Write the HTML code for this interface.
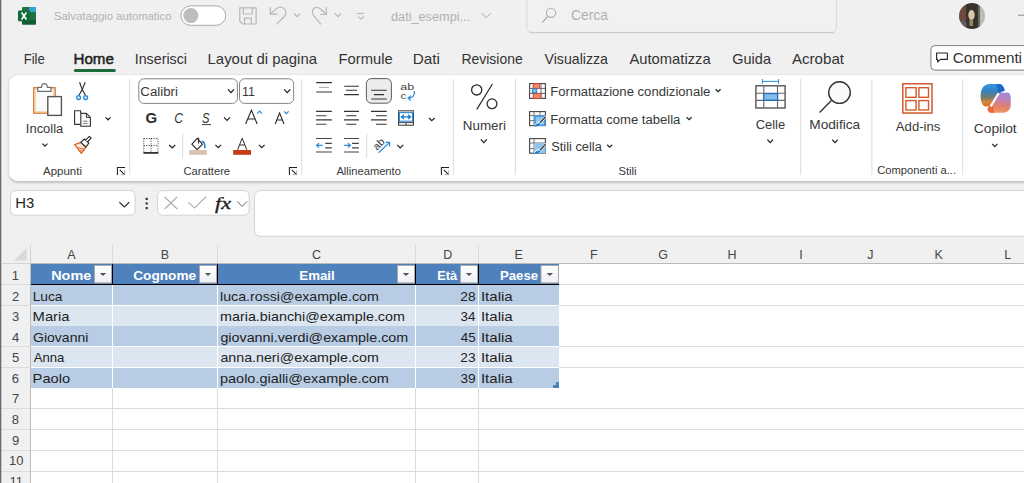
<!DOCTYPE html>
<html><head><meta charset="utf-8"><title>Excel</title>
<style>
html,body{margin:0;padding:0;width:1024px;height:483px;overflow:hidden;background:#f0f0f0;font-family:"Liberation Sans", sans-serif;}
svg{position:absolute;left:0;top:0;display:block;}
text{white-space:pre;}
</style></head><body>
<svg width="1024" height="483" viewBox="0 0 1024 483">
<defs>
  <filter id="sh" x="-5%" y="-20%" width="110%" height="150%">
    <feDropShadow dx="0" dy="1.6" stdDeviation="1.6" flood-color="#000" flood-opacity="0.26"/>
  </filter>
  <linearGradient id="fbtn" x1="0" y1="0" x2="0" y2="1">
    <stop offset="0" stop-color="#ffffff"/><stop offset="1" stop-color="#eef0f4"/>
  </linearGradient>
</defs>
<!-- app bg -->
<rect x="0" y="0" width="1024" height="483" fill="#f0f0f0"/>

<!-- ===== TITLE BAR ===== -->
<!-- excel logo -->
<g>
  <rect x="22" y="7" width="14" height="17.6" rx="1.2" fill="#1f7244"/>
  <rect x="29" y="7" width="7" height="5.2" fill="#3aa0cc"/>
  <rect x="22" y="19.8" width="14" height="4.8" rx="1" fill="#185a35"/>
  <rect x="18" y="10.5" width="12.2" height="10.8" rx="1" fill="#0f6e3a"/>
  <path d="M21.6 12.6 L26.4 19.4 M26.4 12.6 L21.6 19.4" stroke="#fff" stroke-width="1.7"/>
</g>
<!-- autosave toggle -->
<rect x="180.9" y="5.9" width="44.8" height="19.4" rx="9.7" fill="#fff" stroke="#959595" stroke-width="0.8"/>
<circle cx="190.9" cy="15.6" r="7.5" fill="#bdbdbd"/>
<!-- save -->
<path d="M239.8 7.8 H256.1 V24 H242.6 L239.8 21.2 Z" fill="none" stroke="#b6b6b6" stroke-width="1.2"/>
<path d="M243.4 7.8 V14 H252.3 V7.8" fill="none" stroke="#b6b6b6" stroke-width="1.2"/>
<path d="M244.6 24 V18.2 H251.2 V24" fill="none" stroke="#b6b6b6" stroke-width="1.2"/>
<!-- undo -->
<path d="M270.4 7.3 V14.1 H277.4" fill="none" stroke="#b6b6b6" stroke-width="1.2"/>
<path d="M270.9 13.6 L276.6 8.6 C279.5 6.2 283.6 6.8 285.3 10.2 C286.6 12.8 285.5 15.2 283.8 17 L276.4 24.4" fill="none" stroke="#b6b6b6" stroke-width="1.2"/>
<path d="M294 13.5 L297 16.6 L300 13.5" fill="none" stroke="#b6b6b6" stroke-width="1.1"/>
<!-- redo -->
<path d="M326.3 7.1 V14.5 H320" fill="none" stroke="#b6b6b6" stroke-width="1.2"/>
<path d="M325.8 14 L320.2 8.8 C317.5 6.3 313.6 6.8 312.6 10.6 C311.9 13.2 313.3 15.4 315 17.2 L320.9 24.3" fill="none" stroke="#b6b6b6" stroke-width="1.2"/>
<path d="M335 13.5 L338 16.6 L341 13.5" fill="none" stroke="#b6b6b6" stroke-width="1.1"/>
<!-- customize -->
<path d="M356.8 13.4 H363.8" stroke="#b6b6b6" stroke-width="1.1"/>
<path d="M358 16.6 L361 19 L364 16.6" fill="none" stroke="#b6b6b6" stroke-width="1.1"/>
<!-- filename chevron -->
<path d="M481.6 13.2 L486.1 17.7 L490.6 13.2" fill="none" stroke="#a8a8a8" stroke-width="1"/>
<!-- search box -->
<rect x="526.8" y="-6" width="309.6" height="38.4" rx="5" fill="#f1f1f1" stroke="#d8d8d8" stroke-width="1"/>
<path d="M529 32.6 H834.6" stroke="#cdcdcd" stroke-width="1.2"/>
<circle cx="551" cy="12.8" r="4.6" fill="none" stroke="#b0b0b0" stroke-width="1.1"/>
<path d="M547.5 16.5 L542 22.8" stroke="#b0b0b0" stroke-width="1.2"/>
<!-- avatar -->
<defs>
  <clipPath id="av"><circle cx="972" cy="16" r="13"/></clipPath>
</defs>
<filter id="avb"><feGaussianBlur stdDeviation="0.5"/></filter>
<g clip-path="url(#av)" filter="url(#avb)">
  <rect x="959" y="3" width="26" height="26" fill="#35312f"/>
  <rect x="959" y="3" width="7" height="22" fill="#6e4a3a"/>
  <rect x="979.5" y="3" width="6" height="26" fill="#bdbab4"/>
  <rect x="978" y="3" width="2" height="26" fill="#6a6866"/>
  <ellipse cx="971.5" cy="15" rx="3.2" ry="5" fill="#d9c7a6"/>
  <rect x="969.5" y="19" width="3.5" height="7" fill="#b89a70" opacity="0.8"/>
  <circle cx="962.5" cy="25" r="4.5" fill="#5c5c5c"/>
</g>
<!-- minimize -->
<rect x="1018" y="14.7" width="6" height="1" fill="#8a8a8a"/>

<!-- ===== TABS ===== -->
<rect x="73.9" y="69" width="42" height="3" rx="1.5" fill="#1d6b3d"/>
<!-- commenti button -->
<rect x="930.9" y="45.6" width="100" height="24.5" rx="4" fill="#fff" stroke="#7e7e7e" stroke-width="1"/>
<path d="M936.6 53 H947.4 V59.4 H940.6 L937.6 62 V59.4 H936.6 Z" fill="none" stroke="#262626" stroke-width="1.1" stroke-linejoin="round"/>

<!-- ===== RIBBON PANEL ===== -->
<rect x="9.5" y="75" width="1030" height="105.7" rx="8" fill="#ffffff" filter="url(#sh)"/>
<rect x="10" y="74.6" width="1030" height="105.7" rx="8" fill="none" stroke="#e2e2e2" stroke-width="0.8"/>
<rect x="9.5" y="76" width="1030" height="104.7" rx="8" fill="#ffffff"/>
<!-- ===== FORMULA BAR ===== -->
<rect x="10.5" y="190.6" width="124.6" height="24.6" rx="5" fill="#fff" stroke="#d2d2d2" stroke-width="1"/>
<path d="M119.4 202.2 L124.3 207 L129.2 202.2" fill="none" stroke="#333" stroke-width="1.2"/>
<rect x="145.6" y="197.8" width="2.2" height="2.2" fill="#333"/>
<rect x="145.6" y="202.4" width="2.2" height="2.2" fill="#333"/>
<rect x="145.6" y="207" width="2.2" height="2.2" fill="#333"/>
<rect x="157.6" y="190.6" width="91.6" height="24.6" rx="5" fill="#fff" stroke="#d2d2d2" stroke-width="1"/>
<path d="M164.6 196.9 L177.2 209 M177.2 196.9 L164.6 209" stroke="#a8a8a8" stroke-width="1.1"/>
<path d="M188.4 202.3 L194.6 208.1 L206 196.6" fill="none" stroke="#a8a8a8" stroke-width="1.1"/>
<path d="M237.2 201.4 L242.1 206.4 L247 201.4" fill="none" stroke="#555" stroke-width="0.9"/>
<rect x="254.5" y="190.6" width="800" height="45.7" rx="6" fill="#fff" stroke="#d2d2d2" stroke-width="1"/>

<!-- ===== GRID ===== -->
<!-- column header row -->
<rect x="0" y="244" width="1024" height="20" fill="#f0f0f0"/>
<path d="M14 260.6 L26.6 248 V260.6 Z" fill="#d9d9d9"/>
<rect x="30" y="263" width="994" height="1" fill="#bababa"/>
<!-- header column separators A-E -->
<g fill="#dadada">
  <rect x="112" y="245" width="1" height="18"/>
  <rect x="217" y="245" width="1" height="18"/>
  <rect x="415" y="245" width="1" height="18"/>
  <rect x="478" y="245" width="1" height="18"/>
</g>
<!-- cells bg -->
<rect x="31" y="264" width="993" height="219" fill="#ffffff"/>
<!-- row header right border -->
<rect x="30" y="264" width="1" height="219" fill="#bdbdbd"/>
<rect x="30" y="245" width="1" height="19" fill="#d2d2d2"/>
<rect x="2" y="263" width="28" height="1" fill="#d4d4d4"/>
<!-- horizontal gridlines -->
<g fill="#dcdcdc">
  <rect x="559" y="284" width="465" height="1"/>
  <rect x="559" y="305" width="465" height="1"/>
  <rect x="559" y="346" width="465" height="1"/>
  <rect x="559" y="367" width="465" height="1"/>
  <rect x="31" y="408" width="993" height="1"/>
  <rect x="31" y="429" width="993" height="1"/>
  <rect x="31" y="450" width="993" height="1"/>
  <rect x="31" y="471" width="993" height="1"/>
</g>
<g fill="#dcdcdc">
  <rect x="0" y="284" width="30" height="1"/>
  <rect x="0" y="305" width="30" height="1"/>
  <rect x="0" y="346" width="30" height="1"/>
  <rect x="0" y="367" width="30" height="1"/>
  <rect x="0" y="408" width="30" height="1"/>
  <rect x="0" y="429" width="30" height="1"/>
  <rect x="0" y="450" width="30" height="1"/>
  <rect x="0" y="471" width="30" height="1"/>
</g>
<!-- vertical gridlines below table -->
<g fill="#dcdcdc">
  <rect x="112" y="388" width="1" height="95"/>
  <rect x="217" y="388" width="1" height="95"/>
  <rect x="415" y="388" width="1" height="95"/>
  <rect x="478" y="388" width="1" height="95"/>
</g>
<!-- table -->
<rect x="31" y="264" width="528" height="20" fill="#4f81bd"/>
<rect x="31" y="284" width="528" height="1" fill="#000"/>
<g fill="#000">
  <rect x="112" y="264" width="1" height="20"/>
  <rect x="217" y="264" width="1" height="20"/>
  <rect x="415" y="264" width="1" height="20"/>
  <rect x="478" y="264" width="1" height="20"/>
</g>
<rect x="31" y="285" width="528" height="20" fill="#b8cce4"/>
<rect x="31" y="305" width="528" height="1" fill="#ffffff"/>
<rect x="31" y="306" width="528" height="20" fill="#dce6f1"/>
<rect x="31" y="326" width="528" height="20" fill="#b8cce4"/>
<rect x="31" y="346" width="528" height="1" fill="#ffffff"/>
<rect x="31" y="347" width="528" height="20" fill="#dce6f1"/>
<rect x="31" y="367" width="528" height="1" fill="#ffffff"/>
<rect x="31" y="368" width="528" height="20" fill="#b8cce4"/>
<g fill="#ffffff">
  <rect x="112" y="285" width="1" height="103"/>
  <rect x="217" y="285" width="1" height="103"/>
  <rect x="415" y="285" width="1" height="103"/>
  <rect x="478" y="285" width="1" height="103"/>
</g>
<!-- resize handle -->
<path d="M559 382 V388 H553 V385 H556 V382 Z" fill="#4582b8"/>
<!-- filter buttons -->
<g>
  <rect x="94.5" y="265.5" width="17" height="17.4" fill="url(#fbtn)" stroke="#a9a9a9" stroke-width="1"/>
  <path d="M99.8 273 H106.2 L103 276 Z" fill="#555"/>
  <rect x="199.5" y="265.5" width="17" height="17.4" fill="url(#fbtn)" stroke="#a9a9a9" stroke-width="1"/>
  <path d="M204.8 273 H211.2 L208 276 Z" fill="#555"/>
  <rect x="397.5" y="265.5" width="17" height="17.4" fill="url(#fbtn)" stroke="#a9a9a9" stroke-width="1"/>
  <path d="M402.8 273 H409.2 L406 276 Z" fill="#555"/>
  <rect x="460.5" y="265.5" width="17" height="17.4" fill="url(#fbtn)" stroke="#a9a9a9" stroke-width="1"/>
  <path d="M465.8 273 H472.2 L469 276 Z" fill="#555"/>
  <rect x="541" y="265.5" width="17.4" height="17.4" fill="url(#fbtn)" stroke="#a9a9a9" stroke-width="1"/>
  <path d="M546.6 273 H553 L549.8 276 Z" fill="#555"/>
</g>
<!-- ===== RIBBON ICONS ===== -->
<g fill="none" stroke-linecap="butt">
<!-- separators -->
<g fill="#dcdcdc" stroke="none">
  <rect x="129.2" y="79" width="1" height="96"/>
  <rect x="301.2" y="79" width="1" height="96"/>
  <rect x="452.8" y="79" width="1" height="96"/>
  <rect x="514.8" y="79" width="1" height="96"/>
  <rect x="800.2" y="79" width="1" height="96"/>
  <rect x="871.4" y="79" width="1" height="96"/>
  <rect x="962.2" y="79" width="1" height="96"/>
  <rect x="182.2" y="133" width="1" height="25.6"/>
  <rect x="366.2" y="133" width="1" height="25"/>
</g>
<!-- paste -->
<rect x="33.8" y="87.8" width="21.3" height="25.3" fill="#fafafa" stroke="#e07b35" stroke-width="1.5"/>
<rect x="35.2" y="89.2" width="18.5" height="22.5" fill="none" stroke="#f1d9a6" stroke-width="1.2"/>
<path d="M37.8 87.4 H41.4 C41.6 84.4 43 83.6 44.4 83.6 C45.8 83.6 47.2 84.4 47.4 87.4 H51 V91.4 H37.8 Z" fill="#fff" stroke="#707070" stroke-width="1.2"/>
<rect x="47.8" y="96.6" width="13.6" height="18.8" fill="#fff" stroke="#555" stroke-width="1.4"/>
<!-- cut -->
<path d="M79.6 82.2 L82.2 89.6 L85.4 95.2 M85.2 82.2 L82.2 89.6 L79 95.2" stroke="#2b2b2b" stroke-width="1.15"/>
<circle cx="78.6" cy="97.6" r="1.9" stroke="#2b88d8" stroke-width="1.4"/>
<circle cx="85.6" cy="97.6" r="1.9" stroke="#2b88d8" stroke-width="1.4"/>
<!-- copy -->
<path d="M80.6 124.4 H74.6 V110.8 H80.6 V113" stroke="#333" stroke-width="1.1"/>
<path d="M80.8 113.4 H86.4 L90.4 117.4 V126.3 H80.8 Z" fill="#f6f6f6" stroke="#333" stroke-width="1.1"/>
<path d="M86.4 113.4 V117.4 H90.4" stroke="#333" stroke-width="1"/>
<path d="M83.2 121.2 H87.4 M83.2 123.4 H87.4" stroke="#777" stroke-width="0.9"/>
<path d="M105.6 117.4 L108.1 119.8 L110.6 117.4" stroke="#222" stroke-width="1.2"/>
<!-- format painter -->
<path d="M74.6 144.6 L80.8 142.4 L86 147 L81.4 153.4 Z" fill="#fbe6d8" stroke="#e0662a" stroke-width="1.3" stroke-linejoin="round"/>
<path d="M76.8 147.6 L84 149.2 M78.6 150.6 L82.8 151" stroke="#e0662a" stroke-width="1"/>
<path d="M80.8 142.4 L84.4 139 L88.8 143.2 L86 147 Z" fill="#fff" stroke="#2b2b2b" stroke-width="1.15" stroke-linejoin="round"/>
<path d="M85.6 140.2 L89.4 136.4 L91.2 138.2 L87.4 142" fill="#fff" stroke="#2b2b2b" stroke-width="1.15" stroke-linejoin="round"/>
<!-- incolla chevron -->
<path d="M42.4 143.6 L44.9 146.2 L47.4 143.6" stroke="#222" stroke-width="1.2"/>
<!-- launchers -->
<path d="M117.4 175 V167.4 H125.0" stroke="#222" stroke-width="1.05"/><path d="M119.8 169.9 L124.6 174.6" stroke="#222" stroke-width="1.1"/><path d="M124.6 170.4 V174.6 H120.6" stroke="#999" stroke-width="0.8"/>
<path d="M289.4 175 V167.4 H297.0" stroke="#222" stroke-width="1.05"/><path d="M291.8 169.9 L296.6 174.6" stroke="#222" stroke-width="1.1"/><path d="M296.6 170.4 V174.6 H292.6" stroke="#999" stroke-width="0.8"/>
<path d="M441.4 175 V167.4 H449.0" stroke="#222" stroke-width="1.05"/><path d="M443.8 169.9 L448.6 174.6" stroke="#222" stroke-width="1.1"/><path d="M448.6 170.4 V174.6 H444.6" stroke="#999" stroke-width="0.8"/>

<!-- font combos -->
<rect x="138.8" y="78.8" width="98.6" height="24.6" rx="5" fill="#fff" stroke="#858585" stroke-width="1"/>
<path d="M228 89.4 L231 92.6 L234 89.4" stroke="#222" stroke-width="1.3"/>
<rect x="239.5" y="78.8" width="54.2" height="24.6" rx="5" fill="#fff" stroke="#858585" stroke-width="1"/>
<path d="M284.2 89.4 L287.2 92.6 L290.2 89.4" stroke="#222" stroke-width="1.3"/>
<!-- underline S -->
<path d="M202 124.6 H211" stroke="#3a3a3a" stroke-width="1"/>
<path d="M224 117.4 L227 120.4 L230 117.4" stroke="#222" stroke-width="1.2"/>
<!-- grow/shrink font -->
<path d="M245.6 124 L251.4 110.2 L257.2 124 M247.8 119 H255" stroke="#2b2b2b" stroke-width="1.1"/>
<path d="M257.2 113.6 L259.6 111.2 L262 113.6" stroke="#2b88d8" stroke-width="1.2"/>
<path d="M275.2 124 L279.6 113 L284 124 M276.8 120 H282.4" stroke="#2b2b2b" stroke-width="1.1"/>
<path d="M284.2 111.4 L286.4 113.6 L288.6 111.4" stroke="#2b88d8" stroke-width="1.3"/>
<!-- borders -->
<path d="M143.8 138.5 H158 M143.8 145.6 H158 M151 138.5 V152 M143.8 138.5 V152 M158 138.5 V152" stroke="#333" stroke-width="0.9" stroke-dasharray="1.1 1.3"/>
<rect x="143.4" y="152" width="15" height="1.8" fill="#333" stroke="none"/>
<path d="M169.2 145 L172.2 148 L175.2 145" stroke="#222" stroke-width="1.2"/>
<!-- fill color -->
<path d="M191.9 144.2 L197.2 138.4 L202.4 144.2 L197.2 149.6 Z" fill="#fff" stroke="#2b2b2b" stroke-width="1.1"/>
<path d="M198.6 137.8 V143.4" stroke="#2b2b2b" stroke-width="1.1"/>
<path d="M201.4 141.8 C203.6 141.2 205 142.8 205 148.2" stroke="#2b88d8" stroke-width="1.6"/>
<rect x="189.2" y="150" width="17.6" height="4.8" fill="#ddc3af" stroke="none"/>
<path d="M215.4 144.8 L218.2 147.6 L221 144.8" stroke="#222" stroke-width="1.2"/>
<!-- font color -->
<path d="M237.6 149.8 L242.2 138.2 L246.8 149.8 M239.6 145 H244.8" stroke="#2b2b2b" stroke-width="1"/>
<rect x="233.2" y="150" width="17.8" height="4.8" fill="#c43c12" stroke="none"/>
<path d="M259 144.8 L261.8 147.6 L264.6 144.8" stroke="#222" stroke-width="1.2"/>

<!-- alignment row1 -->
<path d="M316.2 82.6 H332 M316.2 92 H332" stroke="#333" stroke-width="1.1"/>
<path d="M319 87.4 H329" stroke="#aaa" stroke-width="1"/>
<path d="M344.2 86.2 H358.9 M346 90.2 H357 M344.2 94.6 H358.9" stroke="#333" stroke-width="1.1"/>
<rect x="366.4" y="78.6" width="25" height="24.6" rx="5" fill="#ececec" stroke="#5c5c5c" stroke-width="1"/>
<path d="M371.2 90.2 H386.8 M374 94.6 H384 M371.2 99 H386.8" stroke="#333" stroke-width="1.1"/>
<!-- wrap text -->
<path d="M414.4 91 C414.8 95.8 412.6 98.2 408.4 98.2 M410.8 95.6 L408.2 98.2 L410.8 100.6" stroke="#2b88d8" stroke-width="1.25"/>
<!-- alignment row2 -->
<path d="M316.1 111.4 H331.8 M316.1 119.9 H331.8" stroke="#333" stroke-width="1.1"/>
<path d="M316.1 115.7 H326.5 M316.1 124.3 H326.5" stroke="#444" stroke-width="1.1"/>
<path d="M344 111.4 H358.9 M344 119.9 H358.9 M346.2 115.7 H356.3 M346.2 124.3 H356.3" stroke="#333" stroke-width="1.1"/>
<path d="M371 111.4 H386.8 M371 119.9 H386.8 M376 115.7 H386.8 M376 124.3 H386.8" stroke="#333" stroke-width="1.1"/>
<!-- merge -->
<rect x="398.6" y="110.6" width="14.8" height="14.6" fill="#fff" stroke="#333" stroke-width="1"/>
<rect x="398.6" y="110.6" width="14.8" height="2" fill="#bbb" stroke="none"/>
<rect x="399.4" y="112.6" width="13.2" height="8.6" fill="#fff" stroke="#2b88d8" stroke-width="1.1"/>
<path d="M401.6 116.9 H410.4" stroke="#1e7fd0" stroke-width="1.3"/><path d="M403.6 114.6 L400.8 116.9 L403.6 119.2 Z M408.4 114.6 L411.2 116.9 L408.4 119.2 Z" fill="#1e7fd0" stroke="#1e7fd0" stroke-width="0.6"/>
<path d="M398.6 122.6 H413.4 M406 122.6 V125.2" stroke="#333" stroke-width="0.9"/>
<path d="M429 118 L431.8 120.6 L434.6 118" stroke="#222" stroke-width="1.2"/>
<!-- indent -->
<path d="M316 138.5 H331.8 M316 152 H331.8 M325.2 143.4 H331.8 M325.2 147.8 H331.8" stroke="#444" stroke-width="1.2"/>
<path d="M322.6 145.4 H316.8 M319 143.2 L316.6 145.4 L319 147.6" stroke="#2b88d8" stroke-width="1.2"/>
<path d="M344 138.5 H358.9 M344 152 H358.9 M352 143.4 H358.9 M352 147.8 H358.9" stroke="#444" stroke-width="1.2"/>
<path d="M344.2 145.4 H350.2 M348 143.2 L350.4 145.4 L348 147.6" stroke="#2b88d8" stroke-width="1.2"/>
<!-- orientation -->
<text x="378.6" y="147.6" font-family="&quot;Liberation Sans&quot;, sans-serif" font-size="10.5" fill="#333" transform="rotate(-45 378.6 144)" text-anchor="middle">ab</text>
<path d="M378.6 152.8 L389.6 142.4 M385.6 142.4 H389.6 V146.4" stroke="#2b88d8" stroke-width="1.2"/>
<path d="M397.2 144.8 L400.2 147.8 L403.2 144.8" stroke="#222" stroke-width="1.2"/>

<!-- percent -->
<circle cx="476.7" cy="89.9" r="5.1" stroke="#2b2b2b" stroke-width="1.3"/>
<circle cx="492" cy="103.8" r="4.9" stroke="#2b2b2b" stroke-width="1.3"/>
<path d="M492.4 84 L476.8 109.4" stroke="#2b2b2b" stroke-width="1.2"/>
<path d="M480.8 139.4 L483.8 142.6 L486.8 139.4" stroke="#222" stroke-width="1.3"/>

<!-- conditional formatting icon -->
<rect x="529.6" y="83.6" width="15.8" height="14.8" fill="#fff" stroke="#444" stroke-width="1.1"/>
<path d="M529.6 88.4 H545.4 M529.6 93.4 H545.4 M533.6 83.6 V98.4 M541 83.6 V98.4" stroke="#555" stroke-width="0.9"/>
<rect x="533.2" y="83.6" width="6.2" height="4.8" fill="#ec8a6e" stroke="#d24726" stroke-width="0.9"/>
<rect x="533.2" y="93.6" width="7.8" height="4.8" fill="#ec8a6e" stroke="#d24726" stroke-width="0.9"/>
<rect x="532.4" y="88.8" width="4.4" height="4" fill="#7cc0ef" stroke="#1a76c8" stroke-width="0.8"/>
<path d="M715.6 89.2 L718.1 91.6 L720.6 89.2" stroke="#222" stroke-width="1.2"/>
<!-- format as table icon -->
<rect x="529.6" y="111.6" width="15.8" height="14" fill="#fff" stroke="#444" stroke-width="1.1"/>
<path d="M529.6 115.6 H545.4 M529.6 120.6 H545.4 M534 111.6 V125.6 M540 111.6 V125.6" stroke="#666" stroke-width="0.9"/>
<path d="M534.2 115.4 H545.6 V126 H534.2 Z" fill="#4aa0e8" stroke="none"/>
<path d="M536 117 H544 V124.4 H536 Z" fill="#8ec6f2" stroke="none"/>
<path d="M535.2 126.2 C536.4 123.6 538.2 122.8 540.2 122.6 L546.2 116.4" stroke="#fff" stroke-width="2.4"/>
<path d="M540 122.8 L545.6 116.8" stroke="#333" stroke-width="1.3"/>
<path d="M534.6 126.2 C535.8 124.2 537.6 123.4 539.6 123.4 C539.4 125.2 537.6 126.2 534.6 126.2 Z" fill="#1a76c8" stroke="#1a76c8" stroke-width="0.8"/>
<path d="M686.6 117.2 L689.1 119.6 L691.6 117.2" stroke="#222" stroke-width="1.2"/>
<!-- cell styles icon -->
<rect x="529.6" y="138.6" width="15.8" height="14.6" fill="#fff" stroke="#444" stroke-width="1.1"/>
<path d="M529.6 143 H545.4 M529.6 148.6 H534 M534 138.6 V153.2" stroke="#666" stroke-width="0.9"/>
<path d="M534.2 143.4 H545.6 V153.4 H534.2 Z" fill="#8ec6f2" stroke="none"/>
<path d="M535.2 153.6 C536.4 151 538.2 150.2 540.2 150 L546.2 143.8" stroke="#fff" stroke-width="2.4"/>
<path d="M540 150.2 L545.6 144.2" stroke="#333" stroke-width="1.3"/>
<path d="M534.6 153.6 C535.8 151.6 537.6 150.8 539.6 150.8 C539.4 152.6 537.6 153.6 534.6 153.6 Z" fill="#1a76c8" stroke="#1a76c8" stroke-width="0.8"/>
<path d="M607.2 144.8 L609.7 147.2 L612.2 144.8" stroke="#222" stroke-width="1.2"/>

<!-- cells icon -->
<rect x="755.9" y="85.8" width="29.2" height="22.2" fill="#fff" stroke="#555" stroke-width="1.4"/>
<path d="M763.8 85.8 V108 M777.5 85.8 V108 M755.9 93.3 H785.1 M755.9 100.4 H785.1" stroke="#666" stroke-width="1.1"/>
<rect x="763.8" y="93.6" width="13.8" height="6.6" fill="#86bde9" stroke="#1e6fc0" stroke-width="1.2"/>
<path d="M762.4 81.4 H778.6 M762.4 79 V83.8 M778.6 79 V83.8" stroke="#2b88d8" stroke-width="1"/>
<path d="M767.4 139.6 L770.2 142.6 L773 139.6" stroke="#222" stroke-width="1.3"/>
<!-- find -->
<circle cx="839.5" cy="92.6" r="10.8" fill="#fafafa" stroke="#333" stroke-width="1.4"/>
<path d="M831.4 100.6 L819.6 112.4" stroke="#333" stroke-width="1.4"/>
<path d="M832.2 139.6 L835 142.6 L837.8 139.6" stroke="#222" stroke-width="1.3"/>
<!-- add-ins -->
<rect x="902.8" y="83.8" width="29.2" height="29.2" stroke="#d35a2c" stroke-width="1.5"/>
<rect x="905.9" y="87.7" width="10.2" height="9.6" stroke="#d35a2c" stroke-width="1.4"/>
<rect x="918.9" y="87.7" width="9.6" height="9.6" stroke="#d35a2c" stroke-width="1.4"/>
<rect x="905.9" y="100.6" width="10.2" height="9.4" stroke="#d35a2c" stroke-width="1.4"/>
<rect x="918.9" y="100.6" width="9.6" height="9.4" stroke="#d35a2c" stroke-width="1.4"/>
<!-- copilot -->
<defs>
  <linearGradient id="cpl" x1="0" y1="0" x2="0" y2="1">
    <stop offset="0" stop-color="#3594e0"/><stop offset="0.3" stop-color="#2f86c4"/><stop offset="0.5" stop-color="#5f7c88"/><stop offset="0.62" stop-color="#7a7a6a"/><stop offset="0.78" stop-color="#cf8a3c"/><stop offset="1" stop-color="#e5692c"/>
  </linearGradient>
  <linearGradient id="cpr" x1="0.6" y1="0" x2="0.4" y2="1">
    <stop offset="0" stop-color="#a786d6"/><stop offset="0.3" stop-color="#b985c0"/><stop offset="0.5" stop-color="#d57e86"/><stop offset="0.8" stop-color="#e98a66"/><stop offset="1" stop-color="#ef9a6a"/>
  </linearGradient>
</defs>
<path d="M980.6 97 C980.4 89 983.6 84.2 990 84 L999.2 84 C1002 84 1003.6 86.4 1004.8 90.4 L1000.4 92.6 C997.4 97.4 995.2 102.4 993.2 106.2 L985.4 106.6 C982.4 105.8 980.7 102 980.6 97 Z" fill="url(#cpl)" stroke="none"/>
<path d="M996 84.4 L999.4 84 C1002 84 1003.6 86.4 1004.8 90.4 L1000.4 92.6 L997.6 97 C998.6 92 998 87.4 996 84.4 Z" fill="#1f62c4" stroke="none" opacity="0.85"/>
<path d="M998.4 93 L1007.6 92.6 C1009.8 92.8 1010.8 95 1010.8 98.8 L1010.8 104 C1010.8 109.4 1008 112.6 1003.4 112.8 L991.4 112.8 C988.6 112.6 987.4 110.6 987.6 108.4 C991.2 104.4 994.6 98.4 998.4 93 Z" fill="url(#cpr)" stroke="none"/>
<path d="M987.6 108.4 C988.6 107 990 105.4 991.6 103.6 L994.8 112.8 L991.4 112.8 C988.6 112.6 987.4 110.6 987.6 108.4 Z" fill="#e5622c" stroke="none" opacity="0.8"/>
<path d="M990.6 106.4 C993.4 102.4 995.6 97.6 998.8 93.2" stroke="#fff" stroke-width="2.2"/>
<path d="M992.2 143.8 L994.8 146.6 L997.4 143.8" stroke="#222" stroke-width="1.2"/>
</g>

<rect x="0" y="0" width="1.3" height="483" fill="#6a6a6a"/>

<text x="53.99" y="19.50" font-family="&quot;Liberation Sans&quot;, sans-serif" font-size="11.2" fill="#b2b2b2" textLength="117.47" lengthAdjust="spacingAndGlyphs">Salvataggio automatico</text>
<text x="390.99" y="21.00" font-family="&quot;Liberation Sans&quot;, sans-serif" font-size="12" fill="#b0b0b0" textLength="79.16" lengthAdjust="spacingAndGlyphs">dati_esempi...</text>
<text x="571.01" y="19.70" font-family="&quot;Liberation Sans&quot;, sans-serif" font-size="14" fill="#b0b0b0" textLength="36.96" lengthAdjust="spacingAndGlyphs">Cerca</text>
<text x="23.65" y="64.00" font-family="&quot;Liberation Sans&quot;, sans-serif" font-size="15" fill="#333333" textLength="21.16" lengthAdjust="spacingAndGlyphs">File</text>
<text x="73.49" y="64.00" font-family="&quot;Liberation Sans&quot;, sans-serif" font-size="15" stroke="#1f1f1f" stroke-width="0.5" fill="#1f1f1f" textLength="40.46" lengthAdjust="spacingAndGlyphs">Home</text>
<text x="134.72" y="64.00" font-family="&quot;Liberation Sans&quot;, sans-serif" font-size="15" fill="#333333" textLength="52.24" lengthAdjust="spacingAndGlyphs">Inserisci</text>
<text x="207.56" y="64.00" font-family="&quot;Liberation Sans&quot;, sans-serif" font-size="15" fill="#333333" textLength="109.43" lengthAdjust="spacingAndGlyphs">Layout di pagina</text>
<text x="338.52" y="64.00" font-family="&quot;Liberation Sans&quot;, sans-serif" font-size="15" fill="#333333" textLength="54.11" lengthAdjust="spacingAndGlyphs">Formule</text>
<text x="412.77" y="64.00" font-family="&quot;Liberation Sans&quot;, sans-serif" font-size="15" fill="#333333" textLength="27.27" lengthAdjust="spacingAndGlyphs">Dati</text>
<text x="461.49" y="64.00" font-family="&quot;Liberation Sans&quot;, sans-serif" font-size="15" fill="#333333" textLength="61.16" lengthAdjust="spacingAndGlyphs">Revisione</text>
<text x="544.53" y="64.00" font-family="&quot;Liberation Sans&quot;, sans-serif" font-size="15" fill="#333333" textLength="63.46" lengthAdjust="spacingAndGlyphs">Visualizza</text>
<text x="629.43" y="64.00" font-family="&quot;Liberation Sans&quot;, sans-serif" font-size="15" fill="#333333" textLength="81.24" lengthAdjust="spacingAndGlyphs">Automatizza</text>
<text x="732.27" y="64.00" font-family="&quot;Liberation Sans&quot;, sans-serif" font-size="15" fill="#333333" textLength="38.70" lengthAdjust="spacingAndGlyphs">Guida</text>
<text x="791.92" y="64.00" font-family="&quot;Liberation Sans&quot;, sans-serif" font-size="15" fill="#333333" textLength="52.17" lengthAdjust="spacingAndGlyphs">Acrobat</text>
<text x="952.74" y="62.70" font-family="&quot;Liberation Sans&quot;, sans-serif" font-size="14.5" fill="#333333" textLength="69.27" lengthAdjust="spacingAndGlyphs">Commenti</text>
<text x="25.83" y="132.80" font-family="&quot;Liberation Sans&quot;, sans-serif" font-size="12.5" fill="#383838" textLength="37.47" lengthAdjust="spacingAndGlyphs">Incolla</text>
<text x="43.04" y="174.50" font-family="&quot;Liberation Sans&quot;, sans-serif" font-size="11" fill="#383838" textLength="38.92" lengthAdjust="spacingAndGlyphs">Appunti</text>
<text x="140.34" y="95.70" font-family="&quot;Liberation Sans&quot;, sans-serif" font-size="12.3" fill="#383838" textLength="37.58" lengthAdjust="spacingAndGlyphs">Calibri</text>
<text x="242.07" y="95.80" font-family="&quot;Liberation Sans&quot;, sans-serif" font-size="12.3" fill="#383838" textLength="12.93" lengthAdjust="spacingAndGlyphs">11</text>
<text x="145.60" y="122.50" font-family="&quot;Liberation Sans&quot;, sans-serif" font-size="14.5" font-weight="bold" fill="#2b2b2b" textLength="11.64" lengthAdjust="spacingAndGlyphs">G</text>
<text x="174.33" y="122.80" font-family="&quot;Liberation Sans&quot;, sans-serif" font-size="15.5" font-style="italic" fill="#333" textLength="8.84" lengthAdjust="spacingAndGlyphs">C</text>
<text x="202.06" y="122.80" font-family="&quot;Liberation Sans&quot;, sans-serif" font-size="15.5" font-style="italic" fill="#333" textLength="7.47" lengthAdjust="spacingAndGlyphs">S</text>
<text x="183.44" y="174.50" font-family="&quot;Liberation Sans&quot;, sans-serif" font-size="11" fill="#383838" textLength="46.65" lengthAdjust="spacingAndGlyphs">Carattere</text>
<text x="336.44" y="174.50" font-family="&quot;Liberation Sans&quot;, sans-serif" font-size="11" fill="#383838" textLength="64.42" lengthAdjust="spacingAndGlyphs">Allineamento</text>
<text x="462.83" y="129.60" font-family="&quot;Liberation Sans&quot;, sans-serif" font-size="13.5" fill="#383838" textLength="43.18" lengthAdjust="spacingAndGlyphs">Numeri</text>
<text x="550.25" y="95.80" font-family="&quot;Liberation Sans&quot;, sans-serif" font-size="12.3" fill="#383838" textLength="160.12" lengthAdjust="spacingAndGlyphs">Formattazione condizionale</text>
<text x="550.25" y="123.60" font-family="&quot;Liberation Sans&quot;, sans-serif" font-size="12.3" fill="#383838" textLength="130.13" lengthAdjust="spacingAndGlyphs">Formatta come tabella</text>
<text x="551.22" y="150.90" font-family="&quot;Liberation Sans&quot;, sans-serif" font-size="12.3" fill="#383838" textLength="50.59" lengthAdjust="spacingAndGlyphs">Stili cella</text>
<text x="618.49" y="174.50" font-family="&quot;Liberation Sans&quot;, sans-serif" font-size="11" fill="#383838" textLength="18.15" lengthAdjust="spacingAndGlyphs">Stili</text>
<text x="755.75" y="129.30" font-family="&quot;Liberation Sans&quot;, sans-serif" font-size="13" fill="#383838" textLength="29.41" lengthAdjust="spacingAndGlyphs">Celle</text>
<text x="809.31" y="129.30" font-family="&quot;Liberation Sans&quot;, sans-serif" font-size="13" fill="#383838" textLength="50.87" lengthAdjust="spacingAndGlyphs">Modifica</text>
<text x="895.83" y="130.80" font-family="&quot;Liberation Sans&quot;, sans-serif" font-size="12.5" fill="#3a3a3a" textLength="44.53" lengthAdjust="spacingAndGlyphs">Add-ins</text>
<text x="877.24" y="174.40" font-family="&quot;Liberation Sans&quot;, sans-serif" font-size="11" fill="#383838" textLength="78.76" lengthAdjust="spacingAndGlyphs">Componenti a...</text>
<text x="973.81" y="132.90" font-family="&quot;Liberation Sans&quot;, sans-serif" font-size="13" fill="#383838" textLength="42.90" lengthAdjust="spacingAndGlyphs">Copilot</text>
<text x="15.21" y="208.20" font-family="&quot;Liberation Sans&quot;, sans-serif" font-size="14" fill="#262626" textLength="19.04" lengthAdjust="spacingAndGlyphs">H3</text>
<text x="67.31" y="258.60" font-family="&quot;Liberation Sans&quot;, sans-serif" font-size="12.5" fill="#454545">A</text>
<text x="160.66" y="258.60" font-family="&quot;Liberation Sans&quot;, sans-serif" font-size="12.5" fill="#454545">B</text>
<text x="311.91" y="258.60" font-family="&quot;Liberation Sans&quot;, sans-serif" font-size="12.5" fill="#454545">C</text>
<text x="443.28" y="258.60" font-family="&quot;Liberation Sans&quot;, sans-serif" font-size="12.5" fill="#454545">D</text>
<text x="514.59" y="258.60" font-family="&quot;Liberation Sans&quot;, sans-serif" font-size="12.5" fill="#454545">E</text>
<text x="589.94" y="258.60" font-family="&quot;Liberation Sans&quot;, sans-serif" font-size="12.5" fill="#454545">F</text>
<text x="658.28" y="258.60" font-family="&quot;Liberation Sans&quot;, sans-serif" font-size="12.5" fill="#454545">G</text>
<text x="727.50" y="258.60" font-family="&quot;Liberation Sans&quot;, sans-serif" font-size="12.5" fill="#454545">H</text>
<text x="799.28" y="258.60" font-family="&quot;Liberation Sans&quot;, sans-serif" font-size="12.5" fill="#454545">I</text>
<text x="867.25" y="258.60" font-family="&quot;Liberation Sans&quot;, sans-serif" font-size="12.5" fill="#454545">J</text>
<text x="934.41" y="258.60" font-family="&quot;Liberation Sans&quot;, sans-serif" font-size="12.5" fill="#454545">K</text>
<text x="1004.22" y="258.60" font-family="&quot;Liberation Sans&quot;, sans-serif" font-size="12.5" fill="#454545">L</text>
<text x="11.70" y="279.70" font-family="&quot;Liberation Sans&quot;, sans-serif" font-size="13" fill="#454545">1</text>
<text x="11.89" y="300.70" font-family="&quot;Liberation Sans&quot;, sans-serif" font-size="13" fill="#454545">2</text>
<text x="11.93" y="321.25" font-family="&quot;Liberation Sans&quot;, sans-serif" font-size="13" fill="#454545">3</text>
<text x="11.96" y="341.80" font-family="&quot;Liberation Sans&quot;, sans-serif" font-size="13" fill="#454545">4</text>
<text x="11.89" y="362.35" font-family="&quot;Liberation Sans&quot;, sans-serif" font-size="13" fill="#454545">5</text>
<text x="11.83" y="382.90" font-family="&quot;Liberation Sans&quot;, sans-serif" font-size="13" fill="#454545">6</text>
<text x="11.89" y="403.45" font-family="&quot;Liberation Sans&quot;, sans-serif" font-size="13" fill="#454545">7</text>
<text x="11.86" y="424.00" font-family="&quot;Liberation Sans&quot;, sans-serif" font-size="13" fill="#454545">8</text>
<text x="11.89" y="444.55" font-family="&quot;Liberation Sans&quot;, sans-serif" font-size="13" fill="#454545">9</text>
<text x="8.92" y="465.10" font-family="&quot;Liberation Sans&quot;, sans-serif" font-size="13" fill="#454545">10</text>
<text x="9.48" y="485.65" font-family="&quot;Liberation Sans&quot;, sans-serif" font-size="13" fill="#454545">11</text>
<text x="51.16" y="279.70" font-family="&quot;Liberation Sans&quot;, sans-serif" font-size="13.5" font-weight="bold" fill="#ffffff" textLength="40.12" lengthAdjust="spacingAndGlyphs">Nome</text>
<text x="133.20" y="279.70" font-family="&quot;Liberation Sans&quot;, sans-serif" font-size="13.5" font-weight="bold" fill="#ffffff" textLength="62.99" lengthAdjust="spacingAndGlyphs">Cognome</text>
<text x="299.34" y="279.70" font-family="&quot;Liberation Sans&quot;, sans-serif" font-size="13.5" font-weight="bold" fill="#ffffff" textLength="35.31" lengthAdjust="spacingAndGlyphs">Email</text>
<text x="437.17" y="279.70" font-family="&quot;Liberation Sans&quot;, sans-serif" font-size="13.5" font-weight="bold" fill="#ffffff" textLength="19.99" lengthAdjust="spacingAndGlyphs">Età</text>
<text x="500.04" y="279.70" font-family="&quot;Liberation Sans&quot;, sans-serif" font-size="13.5" font-weight="bold" fill="#ffffff" textLength="38.04" lengthAdjust="spacingAndGlyphs">Paese</text>
<text x="32.71" y="300.70" font-family="&quot;Liberation Sans&quot;, sans-serif" font-size="13.5" fill="#222222" textLength="29.67" lengthAdjust="spacingAndGlyphs">Luca</text>
<text x="220.08" y="300.70" font-family="&quot;Liberation Sans&quot;, sans-serif" font-size="13.5" fill="#222222" textLength="158.65" lengthAdjust="spacingAndGlyphs">luca.rossi@example.com</text>
<text x="460.31" y="300.70" font-family="&quot;Liberation Sans&quot;, sans-serif" font-size="13.5" fill="#222222" textLength="15.27" lengthAdjust="spacingAndGlyphs">28</text>
<text x="480.94" y="300.70" font-family="&quot;Liberation Sans&quot;, sans-serif" font-size="13.5" fill="#222222" textLength="31.81" lengthAdjust="spacingAndGlyphs">Italia</text>
<text x="32.62" y="321.25" font-family="&quot;Liberation Sans&quot;, sans-serif" font-size="13.5" fill="#222222" textLength="36.89" lengthAdjust="spacingAndGlyphs">Maria</text>
<text x="220.07" y="321.25" font-family="&quot;Liberation Sans&quot;, sans-serif" font-size="13.5" fill="#222222" textLength="184.85" lengthAdjust="spacingAndGlyphs">maria.bianchi@example.com</text>
<text x="460.46" y="321.25" font-family="&quot;Liberation Sans&quot;, sans-serif" font-size="13.5" fill="#222222" textLength="14.90" lengthAdjust="spacingAndGlyphs">34</text>
<text x="480.94" y="321.25" font-family="&quot;Liberation Sans&quot;, sans-serif" font-size="13.5" fill="#222222" textLength="31.81" lengthAdjust="spacingAndGlyphs">Italia</text>
<text x="33.10" y="341.80" font-family="&quot;Liberation Sans&quot;, sans-serif" font-size="13.5" fill="#222222" textLength="55.23" lengthAdjust="spacingAndGlyphs">Giovanni</text>
<text x="220.43" y="341.80" font-family="&quot;Liberation Sans&quot;, sans-serif" font-size="13.5" fill="#222222" textLength="187.73" lengthAdjust="spacingAndGlyphs">giovanni.verdi@example.com</text>
<text x="460.73" y="341.80" font-family="&quot;Liberation Sans&quot;, sans-serif" font-size="13.5" fill="#222222" textLength="14.83" lengthAdjust="spacingAndGlyphs">45</text>
<text x="480.94" y="341.80" font-family="&quot;Liberation Sans&quot;, sans-serif" font-size="13.5" fill="#222222" textLength="31.81" lengthAdjust="spacingAndGlyphs">Italia</text>
<text x="33.73" y="362.35" font-family="&quot;Liberation Sans&quot;, sans-serif" font-size="13.5" fill="#222222" textLength="30.67" lengthAdjust="spacingAndGlyphs">Anna</text>
<text x="220.43" y="362.35" font-family="&quot;Liberation Sans&quot;, sans-serif" font-size="13.5" fill="#222222" textLength="158.32" lengthAdjust="spacingAndGlyphs">anna.neri@example.com</text>
<text x="460.31" y="362.35" font-family="&quot;Liberation Sans&quot;, sans-serif" font-size="13.5" fill="#222222" textLength="15.27" lengthAdjust="spacingAndGlyphs">23</text>
<text x="480.94" y="362.35" font-family="&quot;Liberation Sans&quot;, sans-serif" font-size="13.5" fill="#222222" textLength="31.81" lengthAdjust="spacingAndGlyphs">Italia</text>
<text x="32.63" y="382.90" font-family="&quot;Liberation Sans&quot;, sans-serif" font-size="13.5" fill="#222222" textLength="37.50" lengthAdjust="spacingAndGlyphs">Paolo</text>
<text x="220.06" y="382.90" font-family="&quot;Liberation Sans&quot;, sans-serif" font-size="13.5" fill="#222222" textLength="168.84" lengthAdjust="spacingAndGlyphs">paolo.gialli@example.com</text>
<text x="460.45" y="382.90" font-family="&quot;Liberation Sans&quot;, sans-serif" font-size="13.5" fill="#222222" textLength="15.19" lengthAdjust="spacingAndGlyphs">39</text>
<text x="480.94" y="382.90" font-family="&quot;Liberation Sans&quot;, sans-serif" font-size="13.5" fill="#222222" textLength="31.81" lengthAdjust="spacingAndGlyphs">Italia</text>
<text x="215.08" y="208.60" font-family="&quot;Liberation Serif&quot;, serif" font-size="17" font-style="italic" stroke="#222" stroke-width="0.35" fill="#222" textLength="16.07" lengthAdjust="spacingAndGlyphs">fx</text>
<text x="400.30" y="90.20" font-family="&quot;Liberation Sans&quot;, sans-serif" font-size="9.5" fill="#444" textLength="13.93" lengthAdjust="spacingAndGlyphs">ab</text>
<text x="400.54" y="98.60" font-family="&quot;Liberation Sans&quot;, sans-serif" font-size="9.5" fill="#444" textLength="5.75" lengthAdjust="spacingAndGlyphs">c</text>
</svg>
</body></html>
